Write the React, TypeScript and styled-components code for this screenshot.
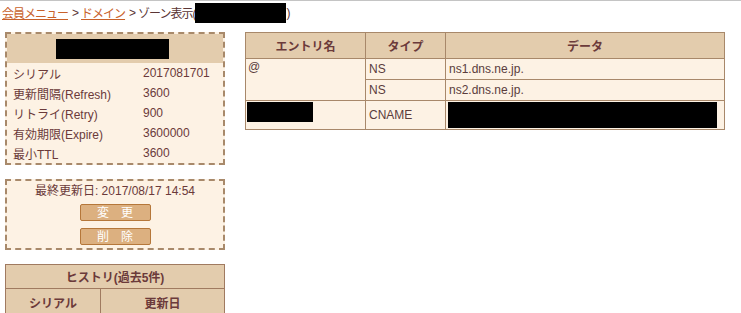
import React from 'react';
import styled, { createGlobalStyle } from 'styled-components';

const GlobalStyle = createGlobalStyle`
  html, body {
    margin: 0;
    padding: 0;
    background: #ffffff;
  }
  body {
    border-top: 1px solid #c4c4c4;
    font-family: "Liberation Sans", "Noto Sans CJK JP", sans-serif;
    font-size: 12px;
    color: #6b3a3a;
  }
`;

type SoaRow = { label: string; value: string };
type RecordRow = { name?: string; hidden?: boolean; type: string; data?: string; rowSpan?: number; skipName?: boolean };

const soaRows: SoaRow[] = [
  { label: 'シリアル', value: '2017081701' },
  { label: '更新間隔(Refresh)', value: '3600' },
  { label: 'リトライ(Retry)', value: '900' },
  { label: '有効期限(Expire)', value: '3600000' },
  { label: '最小TTL', value: '3600' },
];

const records: RecordRow[] = [
  { name: '@', type: 'NS', data: 'ns1.dns.ne.jp.', rowSpan: 2 },
  { skipName: true, type: 'NS', data: 'ns2.dns.ne.jp.' },
  { hidden: true, type: 'CNAME' },
];

const ZonePage = () => {
  return (
    <>
      <GlobalStyle />
      <Breadcrumb>
        <Crumb href="#">会員メニュー</Crumb>
        <Sep>&gt;</Sep>
        <Crumb href="#">ドメイン</Crumb>
        <Sep>&gt;</Sep>
        <span>ゾーン表示(</span>
        <Redact $w={91} $h={20} />
        <span>)</span>
      </Breadcrumb>

      <Main>
        <LeftColumn>
          <DashedBox>
            <BoxHeader>
              <Redact $w={113} $h={20} />
            </BoxHeader>
            {soaRows.map((row) => (
              <SoaLine key={row.label}>
                <SoaLabel>{row.label}</SoaLabel>
                <SoaValue>{row.value}</SoaValue>
              </SoaLine>
            ))}
          </DashedBox>

          <ActionBox>
            <UpdatedAt>最終更新日: 2017/08/17 14:54</UpdatedAt>
            <ActionButton>変　更</ActionButton>
            <ActionButton>削　除</ActionButton>
          </ActionBox>

          <HistoryTable>
            <thead>
              <tr>
                <HistoryTitle colSpan={2}>ヒストリ(過去5件)</HistoryTitle>
              </tr>
              <tr>
                <HistoryHead>シリアル</HistoryHead>
                <HistoryHead>更新日</HistoryHead>
              </tr>
            </thead>
          </HistoryTable>
        </LeftColumn>

        <RecordTable>
          <thead>
            <tr>
              <HeadCell $w={119}>エントリ名</HeadCell>
              <HeadCell $w={79}>タイプ</HeadCell>
              <HeadCell>データ</HeadCell>
            </tr>
          </thead>
          <tbody>
            {records.map((rec, i) => (
              <RecordRowEl key={i} $tall={rec.hidden}>
                {!rec.skipName && (
                  <NameCell rowSpan={rec.rowSpan}>
                    {rec.hidden ? <Redact $w={66} $h={20} /> : rec.name}
                  </NameCell>
                )}
                <Cell>{rec.type}</Cell>
                <Cell>{rec.hidden ? <Redact $w={269} $h={26} /> : rec.data}</Cell>
              </RecordRowEl>
            ))}
          </tbody>
        </RecordTable>
      </Main>
    </>
  );
};

const Breadcrumb = styled.div`
  display: flex;
  align-items: center;
  height: 23px;
  padding-left: 2px;
  color: #5a3535;
  white-space: nowrap;
  letter-spacing: -1px;
`;

const Crumb = styled.a`
  color: #c8612a;
  text-decoration: underline;
`;

const Sep = styled.span`
  margin: 0 3px 0 4px;
`;

const Redact = styled.span<{ $w: number; $h: number }>`
  display: inline-block;
  vertical-align: middle;
  width: ${(p) => p.$w}px;
  height: ${(p) => p.$h}px;
  background: #000;
`;

const Main = styled.div`
  display: flex;
  align-items: flex-start;
  gap: 20px;
  margin-top: 8px;
  padding-left: 5px;
`;

const LeftColumn = styled.div`
  width: 220px;
  display: flex;
  flex-direction: column;
`;

const DashedBox = styled.div`
  border: 2px dashed #a8896a;
  background: #fdf2e4;
`;

const BoxHeader = styled.div`
  height: 29px;
  background: #e3ccad;
  display: flex;
  align-items: center;
  justify-content: center;
  padding-right: 6px;
`;

const SoaLine = styled.div`
  display: flex;
  height: 20px;
  align-items: center;
  padding-left: 6px;
`;

const SoaLabel = styled.span`
  width: 130px;
`;

const SoaValue = styled.span``;

const ActionBox = styled(DashedBox)`
  margin-top: 14px;
  display: flex;
  flex-direction: column;
  align-items: center;
  padding: 3px 0 3px;
`;

const UpdatedAt = styled.div`
  line-height: 14px;
  margin-bottom: 6px;
`;

const ActionButton = styled.button`
  width: 71px;
  height: 17px;
  padding: 0;
  background: #dcb080;
  border: 1px solid #b5773a;
  border-radius: 2px;
  color: #ffffff;
  font-family: "Liberation Sans", "Noto Sans CJK JP", sans-serif;
  font-size: 12px;
  line-height: 14px;
  cursor: pointer;
  & + & {
    margin-top: 7px;
  }
`;

const HistoryTable = styled.table`
  margin-top: 14px;
  width: 220px;
  border-collapse: collapse;
  border: 1px solid #a07a60;
  background: #e3ccad;
`;

const HistoryTitle = styled.th`
  height: 21px;
  border: 1px solid #a07a60;
  font-size: 12px;
  color: #6b3a3a;
`;

const HistoryHead = styled.th`
  height: 24px;
  border: 1px solid #a07a60;
  font-size: 12px;
  color: #6b3a3a;
  &:first-child {
    width: 92px;
  }
`;

const RecordTable = styled.table`
  width: 480px;
  border-collapse: collapse;
  border: 1px solid #a8886a;
`;

const HeadCell = styled.th<{ $w?: number }>`
  ${(p) => (p.$w ? `width: ${p.$w}px;` : '')}
  height: 25px;
  padding: 0;
  background: #e3ccad;
  border: 1px solid #a8886a;
  font-size: 12px;
  color: #6b3a3a;
`;

const RecordRowEl = styled.tr<{ $tall?: boolean }>`
  height: ${(p) => (p.$tall ? 29 : 21)}px;
  background: #fdf2e4;
`;

const Cell = styled.td`
  border: 1px solid #a8886a;
  padding: 0 3px;
  color: #5a3c3c;
  vertical-align: middle;
  & > span {
    margin-left: -1px;
  }
`;

const NameCell = styled(Cell)`
  vertical-align: top;
  padding: 1px 2px;
`;

export default ZonePage;
